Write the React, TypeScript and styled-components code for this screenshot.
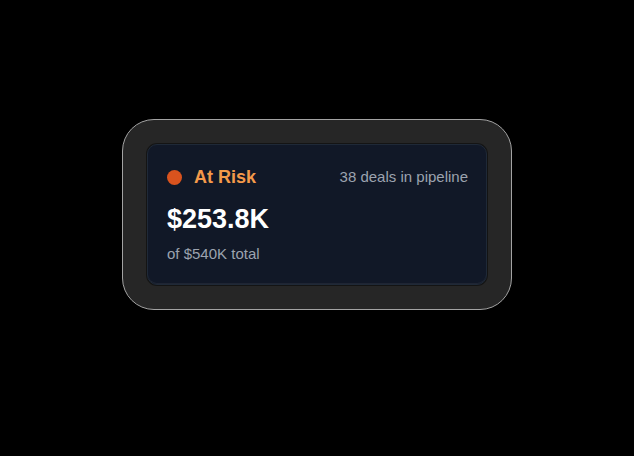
import React from 'react';
import styled, { createGlobalStyle } from 'styled-components';

const GlobalStyle = createGlobalStyle`
    html, body {
        margin: 0;
        padding: 0;
        background: #000000;
    }

    body {
        font-family: "Liberation Sans", Arial, Helvetica, sans-serif;
        -webkit-font-smoothing: antialiased;
    }
`;

const Page = styled.div`
    width: 100%;
    min-height: 456px;
    display: flex;
    justify-content: center;
    align-items: flex-start;
    padding-top: 119px;
    box-sizing: border-box;
`;

const Frame = styled.div`
    width: 390px;
    box-sizing: border-box;
    padding: 24px;
    background: #262626;
    border: 1px solid #a3a3a3;
    border-radius: 32px;
`;

const Card = styled.div`
    box-sizing: border-box;
    height: 141px;
    padding: 20px 19px 19px;
    background: #111827;
    border: 1px solid #1f2937;
    border-radius: 10px;
    box-shadow: 0 0 0 1px rgba(0, 0, 0, 0.45), inset 0 -1px 0 rgba(255, 255, 255, 0.06);
    display: flex;
    flex-direction: column;
`;

const Header = styled.div`
    display: flex;
    align-items: center;
    justify-content: space-between;
    height: 24px;
    margin-bottom: 14px;
`;

const Status = styled.div`
    display: flex;
    align-items: center;
    gap: 12px;
`;

const Dot = styled.span<{ $color: string }>`
    width: 15px;
    height: 15px;
    border-radius: 50%;
    background: ${(p) => p.$color};
`;

const StatusLabel = styled.span<{ $color: string }>`
    color: ${(p) => p.$color};
    font-size: 18px;
    font-weight: 700;
    line-height: 24px;
`;

const Meta = styled.span`
    color: #9ca3af;
    font-size: 15px;
    line-height: 24px;
    margin-right: -1px;
`;

const Amount = styled.div`
    color: #ffffff;
    font-size: 27px;
    font-weight: 700;
    line-height: 32px;
    margin-bottom: 9px;
`;

const Subtext = styled.div`
    color: #9ca3af;
    font-size: 15px;
    line-height: 20px;
`;

interface PipelineCardProps {
    status: string;
    dotColor: string;
    labelColor: string;
    deals: number;
    amount: string;
    total: string;
}

const PipelineCard: React.FC<PipelineCardProps> = ({ status, dotColor, labelColor, deals, amount, total }) => (
    <Frame>
        <Card>
            <Header>
                <Status>
                    <Dot $color={dotColor} />
                    <StatusLabel $color={labelColor}>{status}</StatusLabel>
                </Status>
                <Meta>{deals} deals in pipeline</Meta>
            </Header>
            <Amount>{amount}</Amount>
            <Subtext>of {total} total</Subtext>
        </Card>
    </Frame>
);

export default function App() {
    return (
        <>
            <GlobalStyle />
            <Page>
                <PipelineCard
                    status="At Risk"
                    dotColor="#d9531e"
                    labelColor="#f59a4a"
                    deals={38}
                    amount="$253.8K"
                    total="$540K"
                />
            </Page>
        </>
    );
}
